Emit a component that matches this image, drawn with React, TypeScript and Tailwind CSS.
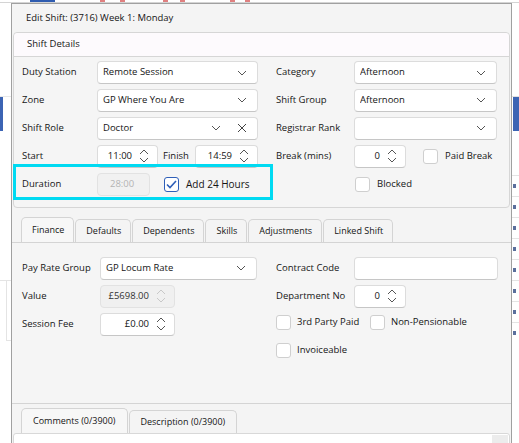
import React from 'react'

const font = "font-['Open_Sans','Noto_Sans',sans-serif]"

function Chevron() {
    return (
        <svg width="10" height="6" viewBox="0 0 10 6" className="shrink-0">
            <path d="M1 1l4 4 4-4" fill="none" stroke="#555" strokeWidth="1" />
        </svg>
    )
}

function Spinner({ disabled }: { disabled?: boolean }) {
    const c = disabled ? '#c8c8c8' : '#555'
    return (
        <svg width="10" height="16" viewBox="0 0 10 16" className="shrink-0">
            <path d="M1 6l4-4 4 4" fill="none" stroke={c} strokeWidth="1" />
            <path d="M1 10l4 4 4-4" fill="none" stroke={c} strokeWidth="1" />
        </svg>
    )
}

function Select({ value, width, clear }: { value: string; width: string; clear?: boolean }) {
    return (
        <div className={`${width} h-[23px] shrink-0 bg-white border border-[#dcdcdc] border-b-[#c6c6c6] rounded-[4px] flex items-center pl-[5px] pr-[10px]`}>
            <span className="flex-1 truncate">{value}</span>
            <Chevron />
            {clear && (
                <svg width="10" height="10" viewBox="0 0 10 10" className="ml-[16px] shrink-0">
                    <path d="M1 1l8 8M9 1l-8 8" stroke="#444" strokeWidth="1" />
                </svg>
            )}
        </div>
    )
}

function NumberBox({ value, width, disabled }: { value: string; width: string; disabled?: boolean }) {
    return (
        <div className={`${width} h-[23px] shrink-0 border rounded-[4px] flex items-center justify-end pr-[8px] gap-[7px] ${disabled ? 'bg-[#f0f0f0] border-[#e2e2e2] text-[#333]' : 'bg-white border-[#dcdcdc] border-b-[#c6c6c6]'}`}>
            <span>{value}</span>
            <Spinner disabled={disabled} />
        </div>
    )
}

function Check({ checked }: { checked?: boolean }) {
    return (
        <div className={`w-[15px] h-[15px] rounded-[3px] bg-white flex items-center justify-center shrink-0 ${checked ? 'border-[1.5px] border-[#2f5fb8]' : 'border border-[#cfcfcf]'}`}>
            {checked && (
                <svg width="11" height="9" viewBox="0 0 11 9">
                    <path d="M1 4.5l3 3 6-6.5" fill="none" stroke="#2f5fb8" strokeWidth="1.6" />
                </svg>
            )}
        </div>
    )
}

function Label({ children, w = 'w-[75px]' }: { children: React.ReactNode; w?: string }) {
    return <span className={`${w} shrink-0 whitespace-nowrap`}>{children}</span>
}

function Tab({ label, active, wide }: { label: string; active?: boolean; wide?: boolean }) {
    return (
        <div className={`border border-[#d4d4d4] border-b-0 rounded-t-[5px] flex items-center whitespace-nowrap shrink-0 ${wide ? 'px-[11px]' : 'pl-[10px] pr-[9px]'} ${active ? 'h-[25px] bg-[#f7f7f7]' : 'h-[23px] bg-[#f4f4f4]'}`}>
            {label}
        </div>
    )
}

export default function App() {
    const marks = [0, 1, 2, 3, 4, 5, 6, 7]
    return (
        <div className={`w-[519px] h-[443px] bg-white flex flex-col overflow-hidden text-[9.5px] text-[#151515] ${font}`}>
            {/* app behind the dialog: top strip */}
            <div className="h-[3px] shrink-0 flex items-end border-b border-[#d4d4d4]">
                <div className="w-[30px]" />
                <div className="w-[25px] h-[3px] bg-[#2f5cb0]" />
                <div className="w-[45px]" />
                <div className="w-[5px] h-[2px] bg-[#e08080]" />
                <div className="w-[15px]" />
                <div className="w-[5px] h-[2px] bg-[#e08080]" />
                <div className="w-[38px]" />
                <div className="w-[5px] h-[2px] bg-[#e08080]" />
                <div className="w-[12px]" />
                <div className="w-[5px] h-[2px] bg-[#e08080]" />
                <div className="w-[45px]" />
                <div className="w-[5px] h-[2px] bg-[#e08080]" />
                <div className="w-[10px]" />
                <div className="w-[5px] h-[2px] bg-[#e08080]" />
            </div>

            <div className="flex flex-1 min-h-0">
                <div className="w-[11px] shrink-0 flex flex-col">
                    <div className="h-[94px] border-b border-[#e8e8e8]" />
                    <div className="h-[34px] w-[3px] bg-[#3c64b4]" />
                    <div className="h-[150px] border-b border-[#e4e4e4]" />
                    <div className="h-[60px] border-b border-[#e4e4e4] ml-[6px] border-l border-[#d8d8d8]" />
                </div>

                <div className="w-[501px] shrink-0 border border-[#a0a0a0] border-b-0 bg-[#f4f4f4] flex flex-col relative overflow-hidden">
                    <div className="h-[28px] shrink-0 flex items-center pl-[14px]">Edit Shift: (3716) Week 1: Monday</div>

                    <div className="shrink-0 mx-[1px] border border-[#d6d6d6] rounded-[4px] bg-[#f5f5f5]">
                        <div className="h-[24px] bg-[#fdfafd] border-b border-[#d6d6d6] rounded-t-[4px] flex items-center pl-[13px]">Shift Details</div>
                        <div className="flex pl-[8px] pr-[11px] pt-[4px] pb-[11px]">
                            <div className="w-[254px] flex flex-col gap-[4px]">
                                <div className="h-[23px] flex items-center">
                                    <Label>Duty Station</Label>
                                    <Select value="Remote Session" width="w-[161px]" />
                                </div>
                                <div className="h-[24px] flex items-center">
                                    <Label>Zone</Label>
                                    <Select value="GP Where You Are" width="w-[161px]" />
                                </div>
                                <div className="h-[24px] flex items-center">
                                    <Label>Shift Role</Label>
                                    <Select value="Doctor" width="w-[161px]" clear />
                                </div>
                                <div className="h-[24px] flex items-center">
                                    <Label>Start</Label>
                                    <NumberBox value="11:00" width="w-[61px]" />
                                    <span className="ml-[5px] w-[32px]">Finish</span>
                                    <NumberBox value="14:59" width="w-[63px]" />
                                </div>
                                <div className="h-[24px] flex items-center">
                                    <Label>Duration</Label>
                                    <div className="w-[53px] h-[23px] bg-[#f1f1f1] border border-[#e2e2e2] rounded-[4px] flex items-center pl-[12px] text-[#b4b4b4]">28:00</div>
                                    <div className="ml-[14px] flex items-center gap-[7px]">
                                        <Check checked />
                                        <span className="text-[10px]">Add 24 Hours</span>
                                    </div>
                                </div>
                            </div>
                            <div className="flex-1 flex flex-col gap-[4px]">
                                <div className="h-[23px] flex items-center">
                                    <Label w="w-[78px]">Category</Label>
                                    <Select value="Afternoon" width="w-[143px]" />
                                </div>
                                <div className="h-[24px] flex items-center">
                                    <Label w="w-[78px]">Shift Group</Label>
                                    <Select value="Afternoon" width="w-[143px]" />
                                </div>
                                <div className="h-[24px] flex items-center">
                                    <Label w="w-[78px]">Registrar Rank</Label>
                                    <Select value="" width="w-[143px]" />
                                </div>
                                <div className="h-[24px] flex items-center">
                                    <Label w="w-[78px]">Break (mins)</Label>
                                    <NumberBox value="0" width="w-[52px]" />
                                    <div className="ml-[17px] flex items-center gap-[7px] whitespace-nowrap">
                                        <Check />
                                        <span>Paid Break</span>
                                    </div>
                                </div>
                                <div className="h-[24px] flex items-center pl-[79px] gap-[7px]">
                                    <Check />
                                    <span>Blocked</span>
                                </div>
                            </div>
                        </div>
                    </div>

                    {/* highlight */}
                    <div className="absolute left-[1px] top-[160px] w-[260px] h-[36px] border-[3px] border-[#00daf2]" />

                    <div className="mt-[9px] shrink-0 flex flex-col">
                        <div className="flex items-end pl-[9px] gap-[1px] text-[9px]">
                            <Tab label="Finance" active />
                            <Tab label="Defaults" />
                            <Tab label="Dependents" />
                            <Tab label="Skills" />
                            <Tab label="Adjustments" />
                            <Tab label="Linked Shift" />
                        </div>
                        <div className="h-[161px] border-t border-[#d4d4d4] bg-[#f5f5f5] flex pl-[10px] pr-[13px] pt-[13px]">
                            <div className="w-[254px] flex flex-col gap-[4px]">
                                <div className="h-[24px] flex items-center">
                                    <Label w="w-[78px]">Pay Rate Group</Label>
                                    <Select value="GP Locum Rate" width="w-[157px]" />
                                </div>
                                <div className="h-[24px] flex items-center">
                                    <Label w="w-[78px]">Value</Label>
                                    <NumberBox value="£5698.00" width="w-[75px]" disabled />
                                </div>
                                <div className="h-[24px] flex items-center">
                                    <Label w="w-[78px]">Session Fee</Label>
                                    <NumberBox value="£0.00" width="w-[75px]" />
                                </div>
                            </div>
                            <div className="flex-1 flex flex-col">
                                <div className="h-[24px] flex items-center">
                                    <Label w="w-[78px]">Contract Code</Label>
                                    <div className="w-[144px] h-[23px] bg-white border border-[#dcdcdc] border-b-[#c6c6c6] rounded-[4px]" />
                                </div>
                                <div className="h-[24px] mt-[4px] flex items-center">
                                    <Label w="w-[78px]">Department No</Label>
                                    <NumberBox value="0" width="w-[52px]" />
                                </div>
                                <div className="h-[20px] mt-[4px] flex items-center whitespace-nowrap">
                                    <Check />
                                    <span className="ml-[6px] w-[73px]">3rd Party Paid</span>
                                    <Check />
                                    <span className="ml-[6px]">Non-Pensionable</span>
                                </div>
                                <div className="h-[20px] mt-[8px] flex items-center gap-[6px]">
                                    <Check />
                                    <span>Invoiceable</span>
                                </div>
                            </div>
                        </div>
                        <div className="border-t border-[#d4d4d4] pt-[4px] flex flex-col">
                            <div className="flex items-end pl-[9px] gap-[1px] text-[9px]">
                                <Tab label="Comments (0/3900)" active wide />
                                <Tab label="Description (0/3900)" wide />
                            </div>
                            <div className="h-[20px] mx-[1px] bg-white border border-[#d8d8d8] rounded-t-[3px] flex justify-end pr-[1px] pt-[1px]">
                                <div className="w-[16px] h-[12px] bg-[#ececec]" />
                            </div>
                        </div>
                    </div>
                </div>

                <div className="flex-1 flex flex-col">
                    <div className="h-[94px] border-b border-[#e0e0e0]" />
                    <div className="h-[34px] bg-[#3c64b4] ml-[1px]" />
                    <div className="h-[44px]" />
                    {marks.map(i => (
                        <div key={i} className="h-[21px] border-t border-[#e4e4e4] flex items-center pl-[1px]">
                            <div className="w-[3px] h-[4px] bg-[#5a6f9c]" />
                        </div>
                    ))}
                </div>
            </div>
        </div>
    )
}
